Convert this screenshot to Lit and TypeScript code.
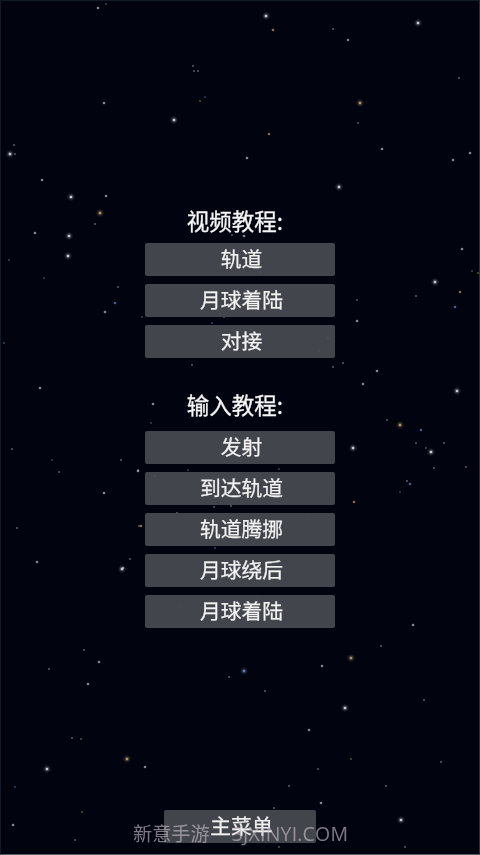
import { LitElement, html, css, svg } from "lit";
import { customElement } from "lit/decorators.js";

type Star = [number, number, number, string?];
const STARS: Star[] = [
  [98,8,1],[106,4,0,"b"],[266,16,2],[273,30,1,"o"],[333,29,0],[348,40,1],[418,23,2],[459,78,0],
  [193,66,0],[194,71,0],[198,71,0],[104,103,1],[200,101,0,"o"],[205,97,0,"b"],[360,103,2,"o"],[174,120,2],
  [358,123,0],[269,134,1,"o"],[10,154,2],[15,154,0],[14,145,0],[247,158,1],[382,149,1],[470,153,1],[453,160,1],
  [42,180,1],[71,197,2],[106,196,1],[339,187,2],
  [100,213,2,"o"],[95,224,0],[35,233,1],[69,236,2],[68,256,2],[9,260,0,"b"],[44,278,0,"b"],[118,287,0],
  [115,303,1,"b"],[105,312,1],[4,343,0,"b"],[40,388,1],[12,449,0],[52,460,0,"b"],[59,472,0],[121,460,0],
  [138,471,1],[104,493,1],[17,528,0],[139,526,0],[37,562,1],[122,569,2],[130,559,0],
  [462,249,1],[472,271,0,"b"],[478,273,0,"o"],[435,282,2],[460,292,1,"o"],[416,296,0],[455,307,1,"b"],
  [357,300,0,"o"],[357,321,1],[343,363,0],[377,371,1],[363,384,1],[457,391,2],[387,420,0],[400,425,2,"o"],
  [421,430,1,"b"],[416,443,0],[444,443,0],[426,448,0,"o"],[431,452,2],[353,448,2],[434,468,0],[466,467,0],
  [407,481,0],[410,484,1,"b"],[400,492,0,"b"],[354,502,1,"o"],[413,625,1],
  [84,650,0],[99,662,1],[49,669,0],[88,684,1],[244,671,2,"b"],[229,677,0],[265,691,0],[322,666,1],[351,658,2,"o"],
  [381,646,0],[345,708,2],[424,700,0],[309,730,1],[72,738,0],[81,739,0,"o"],[127,759,2,"o"],[145,767,1],[47,769,2],
  [351,759,0,"o"],[318,769,0],[441,762,0],[15,787,0,"b"],[289,786,0],[386,786,0],[82,812,0,"o"],[321,803,1],
  [274,808,0],[13,825,1],[75,840,0],[401,820,2],[405,847,0],[279,847,0,"o"],
  [244,236,1],[232,235,0],[261,272,1],[142,317,0,"b"],[220,314,1],[224,317,0],[212,323,0,"b"],[328,338,1],[319,351,0],
  [192,365,0],[333,367,0],[153,404,1],[151,423,0,"b"],[263,455,0,"o"],[138,470,0],[188,470,0,"b"],[279,469,0,"b"],
  [155,476,1],[214,507,0],[231,506,0],[177,513,0],[307,514,0],[141,526,1,"o"],[215,548,0,"b"],[123,568,1],[158,576,0],
  [204,580,0],[179,606,0],[258,598,0],
];
const TINT: Record<string, string> = { w: "#c8ccd0", o: "#c8a47c", b: "#6f8fc8" };

@customElement("app-root")
export class AppRoot extends LitElement {
  static styles = css`
    :host {
      display: block;
      width: 480px;
      height: 855px;
      font-family: "Noto Sans CJK SC", "Noto Sans", sans-serif;
    }
    .page {
      position: relative;
      box-sizing: border-box;
      width: 480px;
      height: 855px;
      overflow: hidden;
      background: #01030e;
      border: 1px solid #101a26;
      border-bottom-color: #596064;
      border-right-color: #2a3138;
      display: flex;
      flex-direction: column;
      align-items: center;
      padding: 206px 0 11px;
    }
    .sky {
      position: absolute;
      left: -1px;
      top: -1px;
      width: 480px;
      height: 855px;
      filter: blur(0.7px);
    }
    .group {
      position: relative;
      display: flex;
      flex-direction: column;
      align-items: center;
      gap: 8px;
    }
    .group + .group {
      margin-top: 33px;
    }
    .title {
      height: 27px;
      line-height: 27px;
      margin-bottom: 1px;
      padding-right: 10px;
      font-size: 22.5px;
      color: #f6f6f6;
      -webkit-text-stroke: 0.3px #f6f6f6;
      filter: blur(0.5px);
      white-space: nowrap;
    }
    .group + .group .title {
      margin-bottom: 5px;
    }
    .btn {
      box-sizing: border-box;
      width: 190px;
      height: 33px;
      border-radius: 2px;
      background: rgba(70, 73, 81, 0.94);
      display: flex;
      align-items: center;
      justify-content: center;
      padding-left: 3px;
    }
    .btn span {
      font-size: 20.8px;
      line-height: 30px;
      margin-top: -4px;
      color: #f2f2f2;
      -webkit-text-stroke: 0.25px #f2f2f2;
      filter: blur(0.5px);
      white-space: nowrap;
    }
    .menu {
      position: relative;
      width: 152px;
      margin-top: auto;
    }
    .mark {
      position: absolute;
      left: 132px;
      top: 818px;
      display: flex;
      gap: 22px;
      align-items: center;
      height: 28px;
      font-size: 19.2px;
      color: rgba(204, 192, 204, 0.62);
      white-space: nowrap;
      filter: blur(0.3px);
    }
    .mark .latin {
      font-family: "Open Sans", "Noto Sans", sans-serif;
      font-size: 19.5px;
      letter-spacing: 0.2px;
    }
  `;

  private stars() {
    return STARS.map(([x, y, k, c]) => {
      const col = TINT[c ?? "w"];
      if (k === 0)
        return svg`<circle cx=${x} cy=${y} r="1.1" fill=${col} opacity="0.42"></circle>`;
      if (k === 1)
        return svg`<circle cx=${x} cy=${y} r="1.3" fill=${col} opacity="0.66"></circle>`;
      return svg`<circle cx=${x} cy=${y} r="3.8" fill=${col} opacity="0.1"></circle>
        <circle cx=${x} cy=${y} r="2.4" fill=${col} opacity="0.22"></circle>
        <circle cx=${x} cy=${y} r="1.3" fill=${c ? col : "#e4e6ea"} opacity="0.85"></circle>`;
    });
  }

  private btn(label: string) {
    return html`<div class="btn"><span>${label}</span></div>`;
  }

  render() {
    return html`<div class="page">
      <svg class="sky" viewBox="0 0 480 855">${this.stars()}</svg>
      <div class="group">
        <div class="title">视频教程:</div>
        ${["轨道", "月球着陆", "对接"].map((t) => this.btn(t))}
      </div>
      <div class="group">
        <div class="title">输入教程:</div>
        ${["发射", "到达轨道", "轨道腾挪", "月球绕后", "月球着陆"].map((t) => this.btn(t))}
      </div>
      <div class="btn menu"><span>主菜单</span></div>
      <div class="mark"><span>新意手游</span><span class="latin">3JXINYI.COM</span></div>
    </div>`;
  }
}
